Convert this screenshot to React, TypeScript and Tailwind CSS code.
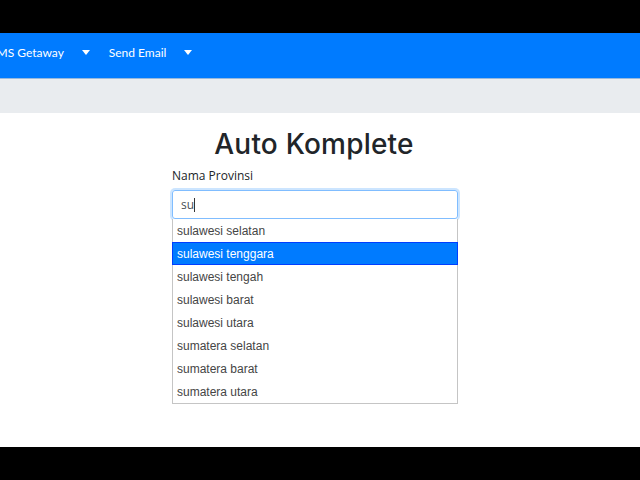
import { useState } from 'react';

const items = [
    'sulawesi selatan',
    'sulawesi tenggara',
    'sulawesi tengah',
    'sulawesi barat',
    'sulawesi utara',
    'sumatera selatan',
    'sumatera barat',
    'sumatera utara',
];

const Caret = () => (
    <span className="inline-block w-0 h-0 border-l-[4px] border-r-[4px] border-t-[5px] border-l-transparent border-r-transparent border-t-white ml-[18px] mb-[2px]" />
);

const App = () => {
    const [value] = useState('su');
    const active = 1;

    return (
        <div className="w-[640px] h-[480px] flex flex-col bg-black font-['Open_Sans',sans-serif] overflow-hidden">
            <div className="h-[33px] shrink-0" />
            <nav className="h-[45px] shrink-0 bg-[#007bff] flex items-center text-white text-[12px] font-['Lato',sans-serif] pb-[5px]">
                <div className="flex items-center ml-[-10px]">
                    <span>SMS Getaway</span>
                    <Caret />
                </div>
                <div className="flex items-center ml-[19px]">
                    <span>Send Email</span>
                    <Caret />
                </div>
            </nav>
            <div className="h-[35px] shrink-0 bg-[#e9ecef] border-t border-[#1f6fc4]/40" />
            <main className="h-[334px] shrink-0 bg-white flex justify-center">
                <div className="w-[286px] ml-[-10px] flex flex-col">
                    <h1 className="text-[28px] font-medium font-['Inter',sans-serif] tracking-[0.2px] text-[#212529] text-center mt-[13px] leading-[36px] ml-[-2px]">Auto Komplete</h1>
                    <label className="text-[12px] text-[#212529] mt-[6px] leading-[16px]">Nama Provinsi</label>
                    <div className="mt-[6px] h-[29px] border border-[#80bdff] rounded-[3px] shadow-[0_0_0_2px_rgba(0,123,255,0.2)] flex items-center px-[8px] text-[12px] text-[#495057]">
                        <span>{value}</span>
                        <span className="w-px h-[14px] bg-[#333]" />
                    </div>
                    <ul className="border border-[#c5c5c5] border-t-0 bg-white font-['Liberation_Sans',Arial,sans-serif] text-[12px]">
                        {items.map((item, i) => (
                            <li key={item}
                                className={i === active
                                    ? 'h-[23px] flex items-center px-[4px] bg-[#007bff] text-white border border-[#003eff] -mx-px'
                                    : 'h-[23px] flex items-center px-[4px] text-[#454545]'}>
                                {item}
                            </li>
                        ))}
                    </ul>
                </div>
            </main>
        </div>
    );
};

export default App;
